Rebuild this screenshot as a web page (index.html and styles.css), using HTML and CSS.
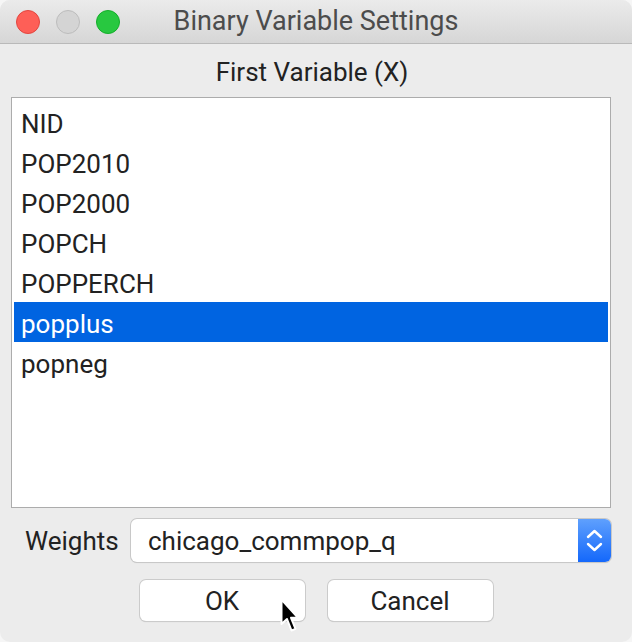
FILE: index.html
```html
<!DOCTYPE html>
<html>
<head>
<meta charset="utf-8">
<link rel="stylesheet" href="styles.css">
</head>
<body>
<div class="window">
  <div class="titlebar">
    <div class="lights">
      <span class="light red"></span>
      <span class="light gray"></span>
      <span class="light green"></span>
    </div>
    <div class="title">Binary Variable Settings</div>
  </div>
  <div class="content">
    <div class="heading">First Variable (X)</div>
    <div class="list">
      <div class="row">NID</div>
      <div class="row">POP2010</div>
      <div class="row">POP2000</div>
      <div class="row">POPCH</div>
      <div class="row">POPPERCH</div>
      <div class="row selected">popplus</div>
      <div class="row">popneg</div>
    </div>
    <div class="weights">
      <span class="label">Weights</span>
      <div class="combo">
        <span class="combo-text">chicago_commpop_q</span>
        <span class="stepper">
          <svg width="33" height="43" viewBox="0 0 33 43">
            <path d="M10 18 L16.5 12 L23 18" fill="none" stroke="#fff" stroke-width="2.4" stroke-linecap="round" stroke-linejoin="round"/>
            <path d="M10 25 L16.5 31 L23 25" fill="none" stroke="#fff" stroke-width="2.4" stroke-linecap="round" stroke-linejoin="round"/>
          </svg>
        </span>
      </div>
    </div>
    <div class="buttons">
      <button class="btn">OK</button>
      <button class="btn">Cancel</button>
    </div>
  </div>
  <svg class="cursor" width="20" height="36" viewBox="0 0 20 36">
    <path d="M1.5 1.5 L1.5 26 L7 21 L11.5 32.5 L15.5 30.8 L11 19.8 L18 19.8 Z" fill="#000" stroke="#fff" stroke-width="2" stroke-linejoin="round"/>
  </svg>
</div>
</body>
</html>
```

FILE: styles.css
```css
html, body {
  margin: 0;
  padding: 0;
  background: #f6f6f6;
}
body {
  font-family: Roboto, "Liberation Sans", sans-serif;
  width: 632px;
  height: 642px;
  overflow: hidden;
}
.window {
  position: relative;
  width: 632px;
  height: 642px;
  border-radius: 10px;
  overflow: hidden;
  background: #ececec;
  box-sizing: border-box;
}
.titlebar {
  height: 43px;
  border-bottom: 1px solid #b9b9b9;
  background: linear-gradient(#ebebeb, #d6d6d6);
  display: flex;
  align-items: center;
  position: relative;
}
.lights {
  display: flex;
  gap: 16px;
  padding-left: 16px;
  position: relative;
  z-index: 1;
}
.light {
  width: 24px;
  height: 24px;
  border-radius: 50%;
  box-sizing: border-box;
  display: block;
}
.red { background: #fe5f57; border: 1px solid #e2463f; }
.gray { background: #d4d4d4; border: 1px solid #bcbcbc; }
.green { background: #28c840; border: 1px solid #14ae2a; }
.title {
  position: absolute;
  left: 0;
  right: 0;
  text-align: center;
  font-size: 27px;
  color: #4c4c4c;
  line-height: 43px;
}
.content {
  display: flex;
  flex-direction: column;
}
.heading {
  height: 53px;
  line-height: 56px;
  text-align: center;
  font-size: 26px;
  color: #222;
  padding-right: 8px;
}
.list {
  margin-left: 11px;
  width: 600px;
  height: 411px;
  box-sizing: border-box;
  border: 1px solid #acacac;
  background: #fff;
  padding: 4px 2px 0 2px;
}
.row {
  height: 40px;
  line-height: 44px;
  padding-left: 7px;
  font-size: 26px;
  color: #222;
}
.row.selected {
  background: #0064e1;
  color: #fff;
}
.weights {
  display: flex;
  align-items: center;
  margin-top: 11px;
  padding-left: 25px;
  height: 43px;
}
.label {
  font-size: 26px;
  color: #222;
  width: 106px;
}
.combo {
  width: 480px;
  height: 43px;
  box-sizing: border-box;
  border-radius: 6px;
  background: #fff;
  box-shadow: 0 0 0 1px #c8c8c8, 0 1px 1px rgba(0,0,0,0.15);
  display: flex;
  align-items: center;
  overflow: hidden;
}
.combo-text {
  flex: 1;
  padding-left: 17px;
  font-size: 26px;
  color: #222;
}
.stepper {
  width: 33px;
  height: 43px;
  background: linear-gradient(#5fa0fd, #1468fb);
  display: block;
}
.stepper svg { display: block; }
.buttons {
  display: flex;
  justify-content: center;
  gap: 23px;
  margin-top: 18px;
}
.btn {
  width: 165px;
  height: 41px;
  border: none;
  border-radius: 6px;
  background: #fff;
  box-shadow: 0 0 0 1px #cbcbcb, 0 1px 1px rgba(0,0,0,0.18);
  font-family: Roboto, "Liberation Sans", sans-serif;
  font-size: 26px;
  color: #222;
  padding: 0;
}
.cursor {
  position: absolute;
  left: 280px;
  top: 598px;
}
```
